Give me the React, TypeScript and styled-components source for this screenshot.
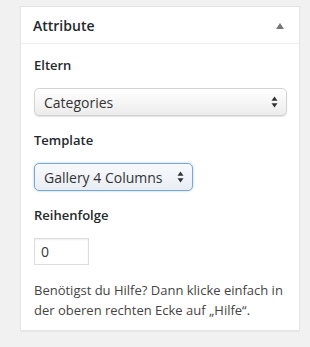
import styled, { createGlobalStyle } from 'styled-components';

const GlobalStyle = createGlobalStyle`
  html, body {
    margin: 0;
    padding: 0;
    background: #f1f1f1;
  }
  body {
    font-family: 'Open Sans', 'Liberation Sans', sans-serif;
  }
`;

function UpDownArrows() {
  return (
    <svg width="7" height="12" viewBox="0 0 7 12">
      <path d="M3.5 0.5 L6.5 4.8 L0.5 4.8 Z" fill="#333" />
      <path d="M3.5 11.5 L6.5 7.2 L0.5 7.2 Z" fill="#333" />
    </svg>
  );
}

export default function App() {
  return (
    <>
      <GlobalStyle />
      <Page>
        <Panel>
          <Header>
            <Title>Attribute</Title>
            <Toggle />
          </Header>
          <Body>
            <Label>Eltern</Label>
            <SelectBox $wide>
              <span>Categories</span>
              <UpDownArrows />
            </SelectBox>
            <Label>Template</Label>
            <SelectBox $focused>
              <span>Gallery 4 Columns</span>
              <UpDownArrows />
            </SelectBox>
            <Label>Reihenfolge</Label>
            <NumberInput type="text" defaultValue="0" />
            <Help>
              Benötigst du Hilfe? Dann klicke einfach in der oberen rechten Ecke auf „Hilfe“.
            </Help>
          </Body>
        </Panel>
      </Page>
    </>
  );
}

const Page = styled.div`
  padding: 6px 10px 17px 20px;
  width: 310px;
  box-sizing: border-box;
`;

const Panel = styled.div`
  width: 280px;
  background: #fff;
  border: 1px solid #e5e5e5;
  box-shadow: 0 1px 1px rgba(0, 0, 0, 0.04);
  box-sizing: border-box;
`;

const Header = styled.div`
  display: flex;
  align-items: center;
  justify-content: space-between;
  height: 35px;
  padding: 1px 15px 0 12px;
  border-bottom: 1px solid #eee;
`;

const Title = styled.h2`
  margin: 0;
  font-size: 14px;
  font-weight: 600;
  color: #23282d;
  line-height: 20px;
`;

const Toggle = styled.span`
  width: 0;
  height: 0;
  border-left: 4px solid transparent;
  border-right: 4px solid transparent;
  border-bottom: 6px solid #777;
`;

const Body = styled.div`
  display: flex;
  flex-direction: column;
  align-items: flex-start;
  padding: 11px 12px 10px 13px;
`;

const Label = styled.p`
  margin: 0 0 14px 0;
  font-size: 13px;
  font-weight: 600;
  line-height: 20px;
  color: #23282d;
`;

const SelectBox = styled.div<{ $wide?: boolean; $focused?: boolean }>`
  display: flex;
  align-items: center;
  justify-content: space-between;
  box-sizing: border-box;
  width: ${(p) => (p.$wide ? '253px' : '159px')};
  height: 28px;
  margin: -1px 0 14px 0;
  padding: 0 8px 0 9px;
  font-size: 14px;
  color: #333;
  border-radius: 5px;
  border: 1px solid ${(p) => (p.$focused ? '#7ba6d6' : '#d3d3d3')};
  background: ${(p) =>
    p.$focused
      ? 'linear-gradient(#f7f9fc, #e9eef5)'
      : 'linear-gradient(#ffffff, #ececec)'};
  box-shadow: ${(p) =>
    p.$focused
      ? '0 0 2px rgba(30, 140, 190, 0.5)'
      : '0 1px 1px rgba(0, 0, 0, 0.12)'};
`;

const NumberInput = styled.input`
  box-sizing: border-box;
  width: 55px;
  height: 27px;
  margin: -1px 0 15px 0;
  padding: 0 6px;
  font-family: inherit;
  font-size: 14px;
  color: #32373c;
  border: 1px solid #ddd;
  border-radius: 0;
  box-shadow: inset 0 1px 2px rgba(0, 0, 0, 0.07);
  outline: none;
`;

const Help = styled.p`
  margin: 0;
  font-size: 13px;
  line-height: 20px;
  color: #444;
`;
